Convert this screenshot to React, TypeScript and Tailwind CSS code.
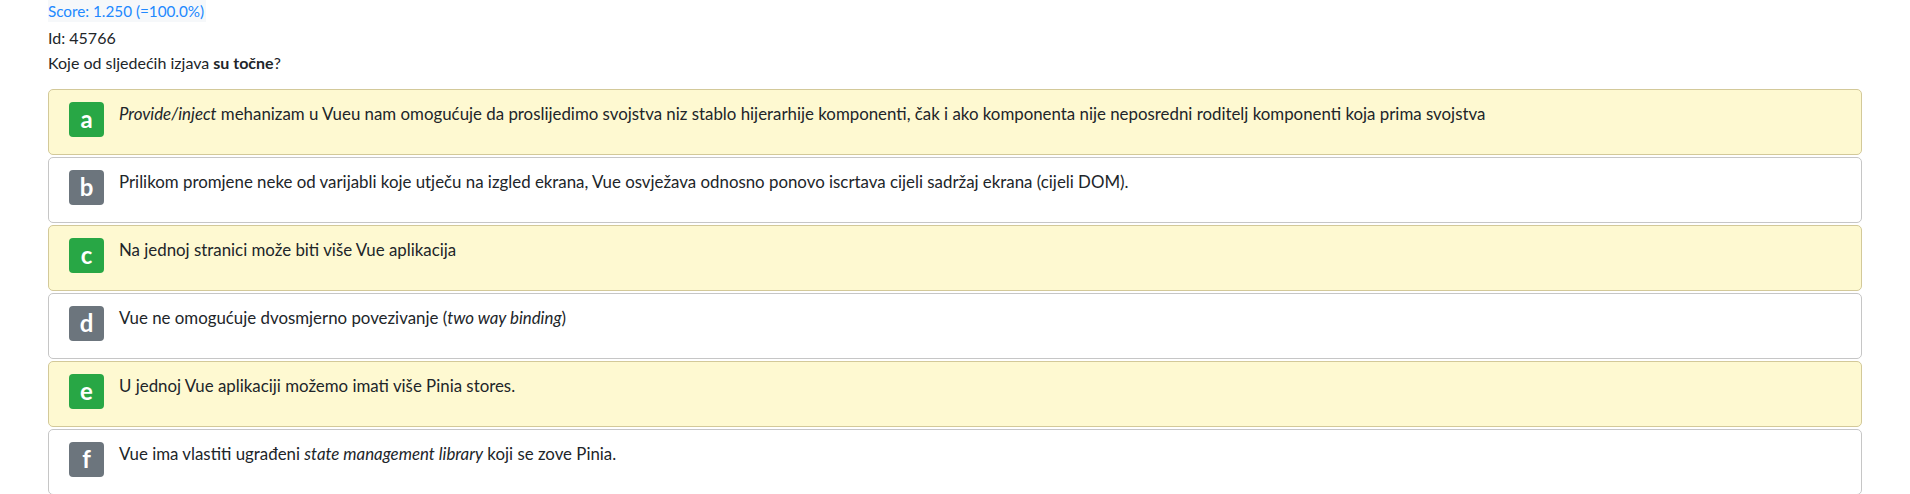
import React from "react";

type Opt = { letter: string; correct: boolean; content: React.ReactNode };

const options: Opt[] = [
  {
    letter: "a",
    correct: true,
    content: (
      <>
        <i>Provide/inject</i> mehanizam u Vueu nam omogućuje da proslijedimo svojstva niz stablo hijerarhije komponenti, čak i ako komponenta nije neposredni roditelj komponenti koja prima svojstva
      </>
    ),
  },
  {
    letter: "b",
    correct: false,
    content: (
      <>
        Prilikom promjene neke od varijabli koje utječu na izgled ekrana, Vue osvježava odnosno ponovo iscrtava cijeli sadržaj ekrana (cijeli DOM).
      </>
    ),
  },
  {
    letter: "c",
    correct: true,
    content: <>Na jednoj stranici može biti više Vue aplikacija</>,
  },
  {
    letter: "d",
    correct: false,
    content: (
      <>
        Vue ne omogućuje dvosmjerno povezivanje (<i>two way binding</i>)
      </>
    ),
  },
  {
    letter: "e",
    correct: true,
    content: <>U jednoj Vue aplikaciji možemo imati više Pinia stores.</>,
  },
  {
    letter: "f",
    correct: false,
    content: (
      <>
        Vue ima vlastiti ugrađeni <i>state management library</i> koji se zove Pinia.
      </>
    ),
  },
];

export default function App() {
  return (
    <div
      className="min-h-screen bg-white px-[48px] text-[16px] text-[#212529]"
      style={{ fontFamily: "Lato, 'Open Sans', sans-serif" }}
    >
      <div className="h-[25px] leading-[22px]">
        <span className="inline-block h-[22px] bg-[#f6f8fa] pr-[2px] text-[15.25px] text-[#2188ff]">
          Score: 1.250 (=100.0%)
        </span>
      </div>
      <div className="h-[25px] leading-[25px]">Id: 45766</div>
      <div className="h-[25px] leading-[25px]">
        Koje od sljedećih izjava <b>su točne</b>?
      </div>
      <div className="mt-[14px] flex flex-col gap-[2px]">
        {options.map((o) => (
          <div
            key={o.letter}
            className={
              "flex h-[66px] items-start gap-[15px] rounded-[5px] border pl-[20px] pt-[12px] " +
              (o.correct
                ? "border-[#d3c999] bg-[#fef9d1]"
                : "border-[#c6c6c6] bg-white")
            }
          >
            <div
              className={
                "flex h-[35px] w-[35px] shrink-0 items-center justify-center rounded-[4px] pb-[2px] text-[24px] font-bold text-white " +
                (o.correct ? "bg-[#28a745]" : "bg-[#6c757d]")
              }
            >
              {o.letter}
            </div>
            <div className="text-[16.85px] leading-[24px]">{o.content}</div>
          </div>
        ))}
      </div>
    </div>
  );
}
